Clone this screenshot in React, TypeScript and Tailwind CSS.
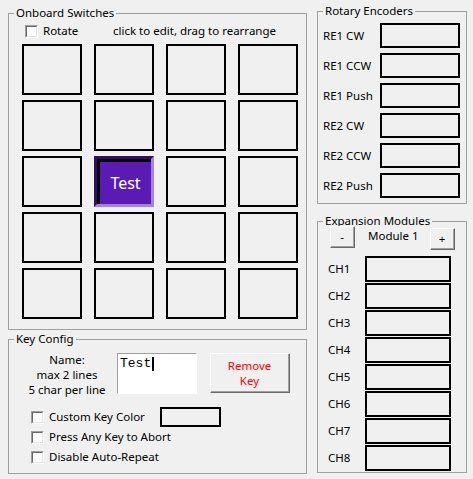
import React from 'react'

const font = "font-['Noto_Sans','Open_Sans',sans-serif]"

function CheckBox() {
  return (
    <div className="w-[13px] h-[13px] shrink-0 border-t border-l border-[#a0a0a0] border-b border-r border-b-white border-r-white">
      <div className="w-full h-full bg-white border-t border-l border-[#696969] border-b border-r border-b-[#e3e3e3] border-r-[#e3e3e3]" />
    </div>
  )
}

function RaisedButton({ className, children }: { className?: string; children: React.ReactNode }) {
  return (
    <div className={`border-t border-l border-white border-b border-r border-b-[#696969] border-r-[#696969] ${className ?? ''}`}>
      <div className="w-full h-full flex flex-col items-center justify-center border-b border-r border-[#a0a0a0] bg-[#f0f0f0]">
        {children}
      </div>
    </div>
  )
}

function Group({ title, className, children }: { title: string; className?: string; children: React.ReactNode }) {
  return (
    <fieldset className={`border border-[#a0a0a0] ${className ?? ''}`}>
      <legend className="ml-[5px] px-[2px] leading-4">{title}</legend>
      {children}
    </fieldset>
  )
}

function Field({ label, labelWidth, boxWidth, height }: { label: string; labelWidth: string; boxWidth: string; height: string }) {
  return (
    <div className={`flex items-center ${height}`}>
      <span className={labelWidth}>{label}</span>
      <div className={`${boxWidth} h-full border-2 border-black`} />
    </div>
  )
}

export default function App() {
  const keys = Array.from({ length: 20 }, (_, i) => i)
  const encoders = ['RE1 CW', 'RE1 CCW', 'RE1 Push', 'RE2 CW', 'RE2 CCW', 'RE2 Push']
  const channels = ['CH1', 'CH2', 'CH3', 'CH4', 'CH5', 'CH6', 'CH7', 'CH8']

  return (
    <div className={`w-[473px] h-[479px] bg-[#f0f0f0] flex text-[11.5px] text-black ${font}`}>
      {/* left column */}
      <div className="ml-[8px] w-[299px] flex flex-col">
        <Group title="Onboard Switches" className="mt-[5px] h-[325px]">
          <div className="mt-[2px] h-4 pl-[16px] flex items-center">
            <CheckBox />
            <span className="ml-[5px] w-[70px] leading-4">Rotate</span>
            <span className="leading-4">click to edit, drag to rearrange</span>
          </div>
          <div className="mt-[5px] pl-[13px] grid grid-cols-[repeat(4,60px)] gap-x-[12px] gap-y-[5px]">
            {keys.map((k) =>
              k === 9 ? (
                <div key={k} className="h-[51px] border-[3px] border-t-[#2f105f] border-l-[#2f105f] border-b-[#a47ff0] border-r-[#a47ff0]">
                  <div className="w-full h-full bg-[#5a1bb5] border-t-[3px] border-l-[3px] border-black flex items-center justify-center text-white text-[16px]">
                    Test
                  </div>
                </div>
              ) : (
                <div key={k} className="h-[51px] border-2 border-black" />
              )
            )}
          </div>
        </Group>

        <Group title="Key Config" className="mt-[1px] h-[143px]">
          <div className="flex items-start pl-[8px]">
            <div className="w-[100px] mt-[5px] text-center leading-[15px]">
              <div>Name:</div>
              <div>max 2 lines</div>
              <div>5 char per line</div>
            </div>
            <div className="mt-[6px] w-[80px] h-[41px] bg-white border-t border-l border-[#a0a0a0] border-b border-r border-b-white border-r-white">
              <div className="flex items-center pl-[2px] pt-[2px] font-['Liberation_Mono',monospace] text-[13px] leading-4">
                Test
                <span className="w-[2px] h-[14px] bg-black ml-[1px]" />
              </div>
            </div>
            <RaisedButton className="ml-[13px] mt-[6px] w-[80px] h-[40px]">
              <span className="text-[#ff0000] leading-[15px] text-center">
                Remove
                <br />
                Key
              </span>
            </RaisedButton>
          </div>
          <div className="mt-[10px] pl-[22px] flex flex-col">
            <div className="h-[20px] flex items-center">
              <CheckBox />
              <span className="ml-[5px] w-[111px]">Custom Key Color</span>
              <div className="w-[61px] h-[20px] border-2 border-black" />
            </div>
            <div className="h-[20px] flex items-center">
              <CheckBox />
              <span className="ml-[5px]">Press Any Key to Abort</span>
            </div>
            <div className="h-[20px] flex items-center">
              <CheckBox />
              <span className="ml-[5px]">Disable Auto-Repeat</span>
            </div>
          </div>
        </Group>
      </div>

      {/* right column */}
      <div className="ml-[10px] w-[150px] flex flex-col">
        <Group title="Rotary Encoders" className="mt-[3px] h-[201px]">
          <div className="pt-[4px] pl-[5px] flex flex-col gap-[5px]">
            {encoders.map((e) => (
              <Field key={e} label={e} labelWidth="w-[57px]" boxWidth="w-[80px]" height="h-[25px]" />
            ))}
          </div>
        </Group>

        <Group title="Expansion Modules" className="mt-[9px] h-[260px]">
          <div className="-mt-[3px] pl-[12px] flex items-start">
            <RaisedButton className="w-[25px] h-[22px]">-</RaisedButton>
            <span className="ml-[13px] w-[62px] leading-[20px]">Module 1</span>
            <RaisedButton className="mt-[2px] w-[25px] h-[22px]">+</RaisedButton>
          </div>
          <div className="mt-[6px] pl-[10px] flex flex-col gap-[1px]">
            {channels.map((c) => (
              <Field key={c} label={c} labelWidth="w-[37px]" boxWidth="w-[86px]" height="h-[26px]" />
            ))}
          </div>
        </Group>
      </div>
    </div>
  )
}
